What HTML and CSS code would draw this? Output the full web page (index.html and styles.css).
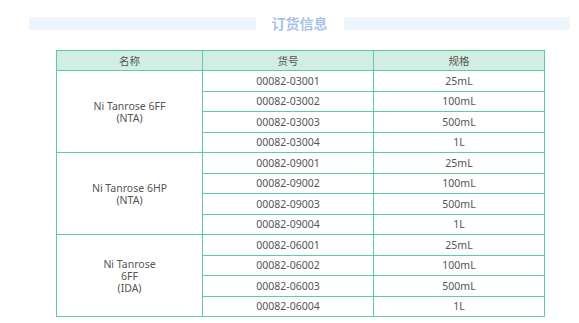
FILE: index.html
```html
<!DOCTYPE html>
<html lang="zh">
<head>
<meta charset="utf-8">
<link rel="stylesheet" href="styles.css">
</head>
<body>
<div class="wrap">
  <div class="title-row">
    <div class="band"></div>
    <div class="title">订货信息</div>
    <div class="band"></div>
  </div>
  <table class="order">
    <thead>
      <tr><th class="c1">名称</th><th class="c2">货号</th><th class="c3">规格</th></tr>
    </thead>
    <tbody>
      <tr><td rowspan="4">Ni Tanrose 6FF<br>(NTA)</td><td>00082-03001</td><td>25mL</td></tr>
      <tr><td>00082-03002</td><td>100mL</td></tr>
      <tr><td>00082-03003</td><td>500mL</td></tr>
      <tr><td>00082-03004</td><td>1L</td></tr>
      <tr><td rowspan="4">Ni Tanrose 6HP<br>(NTA)</td><td>00082-09001</td><td>25mL</td></tr>
      <tr><td>00082-09002</td><td>100mL</td></tr>
      <tr><td>00082-09003</td><td>500mL</td></tr>
      <tr><td>00082-09004</td><td>1L</td></tr>
      <tr><td rowspan="4">Ni Tanrose<br>6FF<br>(IDA)</td><td>00082-06001</td><td>25mL</td></tr>
      <tr><td>00082-06002</td><td>100mL</td></tr>
      <tr><td>00082-06003</td><td>500mL</td></tr>
      <tr><td>00082-06004</td><td>1L</td></tr>
    </tbody>
  </table>
</div>
</body>
</html>
```
FILE: styles.css
```css
html, body {
  margin: 0;
  padding: 0;
  background: #ffffff;
}
body {
  font-family: "Noto Sans", "Noto Sans CJK SC", sans-serif;
  color: #555555;
}
.wrap {
  width: 541px;
  margin-left: 29px;
  padding-top: 14px;
}
.title-row {
  display: flex;
  align-items: center;
  height: 19px;
}
.band {
  flex: 1;
  height: 13px;
  background: #eef6fd;
}
.title {
  padding: 0 16px;
  font-family: "Noto Sans CJK SC", sans-serif;
  font-size: 14px;
  font-weight: 700;
  color: #a8c3ea;
  line-height: 19px;
}
.order {
  margin: 17px 0 0 27px;
  width: 486px;
  border-collapse: collapse;
  table-layout: fixed;
  font-size: 10.5px;
}
.order th, .order td {
  border: 1px solid #5ecba6;
  text-align: center;
  vertical-align: middle;
  padding: 0;
  line-height: 12px;
}
.order th {
  background: #d2eee3;
  font-family: "Noto Sans CJK SC", sans-serif;
  font-weight: 400;
  height: 19px;
  color: #555;
}
.order td {
  height: 19.5px;
}
.c1 { width: 145px; }
.c2 { width: 170px; }
.c3 { width: 170px; }
```
